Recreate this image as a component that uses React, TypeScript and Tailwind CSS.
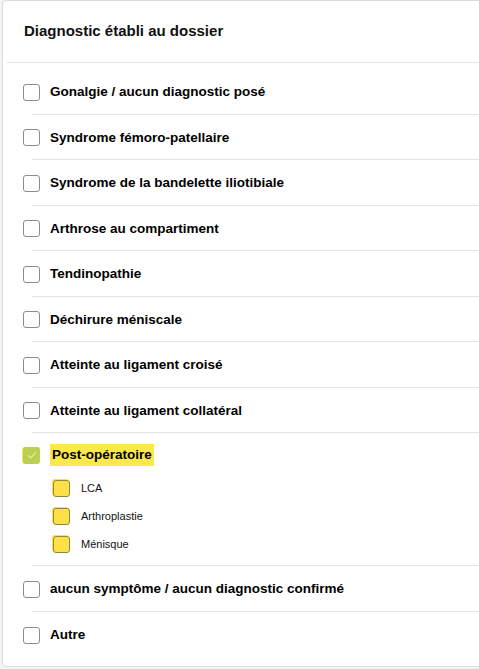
import React from "react"

const items = [
  "Gonalgie / aucun diagnostic posé",
  "Syndrome fémoro-patellaire",
  "Syndrome de la bandelette iliotibiale",
  "Arthrose au compartiment",
  "Tendinopathie",
  "Déchirure méniscale",
  "Atteinte au ligament croisé",
  "Atteinte au ligament collatéral",
]

const subItems = ["LCA", "Arthroplastie", "Ménisque"]

function Box() {
  return <span className="block h-[17px] w-[17px] shrink-0 rounded-[3px] border border-[#8c8c8c] bg-white" />
}

function Row({ label, last }: { label: string; last?: boolean }) {
  return (
    <div className={"ml-[29px] flex h-[45.5px] items-center pt-[2px] " + (last ? "" : "border-b border-[#e2e2e2]")}>
      <div className="-ml-[9px] flex items-center gap-[10px]">
        <Box />
        <span className="text-[13.5px] font-bold text-black">{label}</span>
      </div>
    </div>
  )
}

export default function App() {
  return (
    <div className="h-[669px] w-[479px] overflow-hidden bg-[#f4f4f4] pl-[2px] font-['Liberation_Sans',Arial,sans-serif]">
      <div className="-mr-[10px] h-[667px] rounded-[4px] border border-[#dcdcdc] bg-white">
        {/* Header */}
        <div className="ml-[4px] flex h-[62px] items-center border-b border-[#e2e2e2] pl-[17px]">
          <h1 className="text-[15px] font-semibold text-[#111]">Diagnostic établi au dossier</h1>
        </div>

        <div className="pt-[6px]">
          {items.map((item) => (
            <Row key={item} label={item} />
          ))}

          {/* Post-opératoire */}
          <div className="ml-[29px] border-b border-[#e2e2e2] pb-[12px]">
            <div className="-ml-[9px] flex h-[42px] items-center gap-[10px] pt-[2px]">
              <span className="flex h-[17px] w-[17px] shrink-0 items-center justify-center rounded-[3px] bg-[#b9d055] shadow-[-1px_0_0_#f7e94a]">
                <svg width="10" height="8" viewBox="0 0 10 8" fill="none">
                  <path d="M1 4.2 L3.8 6.8 L9 1.2" stroke="#e8ee8a" strokeWidth="1.2" />
                </svg>
              </span>
              <span className="bg-[#fbe84a] px-[2px] py-[1px] text-[13.5px] font-bold text-black">Post-opératoire</span>
            </div>
            <div className="flex flex-col gap-[10px] pl-[21px] pt-[4px]">
              {subItems.map((s) => (
                <div key={s} className="flex h-[18px] items-center gap-[11px]">
                  <span className="block h-[17px] w-[17px] shrink-0 rounded-[3px] border border-[#8f8a3c] bg-[#fde047] shadow-[-1px_-1px_0_#fde047]" />
                  <span className="text-[11px] text-[#111]">{s}</span>
                </div>
              ))}
            </div>
          </div>

          <Row label="aucun symptôme / aucun diagnostic confirmé" />
          <Row label="Autre" last />
        </div>
      </div>
    </div>
  )
}
